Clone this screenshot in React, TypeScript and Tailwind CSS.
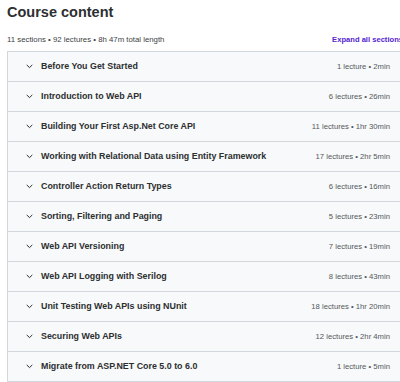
const sections = [
  { title: "Before You Get Started", meta: "1 lecture • 2min" },
  { title: "Introduction to Web API", meta: "6 lectures • 26min" },
  { title: "Building Your First Asp.Net Core API", meta: "11 lectures • 1hr 30min" },
  { title: "Working with Relational Data using Entity Framework", meta: "17 lectures • 2hr 5min" },
  { title: "Controller Action Return Types", meta: "6 lectures • 16min" },
  { title: "Sorting, Filtering and Paging", meta: "5 lectures • 23min" },
  { title: "Web API Versioning", meta: "7 lectures • 19min" },
  { title: "Web API Logging with Serilog", meta: "8 lectures • 43min" },
  { title: "Unit Testing Web APIs using NUnit", meta: "18 lectures • 1hr 20min" },
  { title: "Securing Web APIs", meta: "12 lectures • 2hr 4min" },
  { title: "Migrate from ASP.NET Core 5.0 to 6.0", meta: "1 lecture • 5min" },
];

function Chevron() {
  return (
    <svg width="7" height="5" viewBox="0 0 7 5" fill="none" className="shrink-0">
      <path d="M1 1.2 L3.5 3.6 L6 1.2" stroke="#2d2f31" strokeWidth="1" strokeLinecap="round" strokeLinejoin="round" />
    </svg>
  );
}

export default function App() {
  return (
    <div
      className="w-[400px] h-[382px] overflow-hidden bg-white pl-[7px] text-[#2d2f31]"
      style={{ fontFamily: '"Liberation Sans", Arial, sans-serif' }}
    >
      <h2 className="pt-[2px] text-[14.5px] leading-[20px] font-bold">Course content</h2>
      <div className="mt-[12px] flex items-center justify-between h-[12px]">
        <span className="text-[7.8px] text-[#3e4143]">11 sections • 92 lectures • 8h 47m total length</span>
        <span className="text-[7.6px] font-bold text-[#5624d0] whitespace-nowrap -mr-[3px]">Expand all sections</span>
      </div>
      <div className="mt-[5px] border-t border-l border-[#d1d7dc] bg-[#f7f9fa] w-[400px]">
        {sections.map((s) => (
          <div
            key={s.title}
            className="h-[30px] flex items-center border-b border-[#d1d7dc] pl-[18px] pr-[17px]"
          >
            <Chevron />
            <span className="ml-[8px] text-[8.9px] font-bold flex-1 whitespace-nowrap">{s.title}</span>
            <span className="text-[7.7px] text-[#55585b] whitespace-nowrap">{s.meta}</span>
          </div>
        ))}
      </div>
    </div>
  );
}
